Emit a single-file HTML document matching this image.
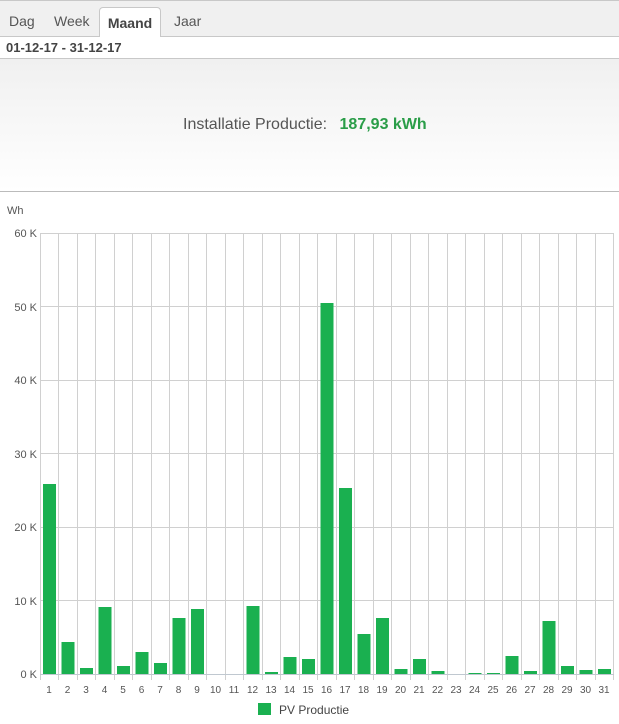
<!DOCTYPE html>
<html><head><meta charset="utf-8"><style>
body{margin:0;width:619px;height:724px;overflow:hidden;background:#fff;font-family:"Liberation Sans",sans-serif;position:relative}
.tabs{position:absolute;left:0;top:0;width:619px;height:37px;background:#f0f0f0;border-top:1px solid #c8c8c8;border-bottom:1px solid #c8c8c8;box-sizing:border-box}
.tab{position:absolute;top:12px;font-size:14px;color:#555}
.act{position:absolute;left:99px;top:7px;width:62px;height:30px;background:#fff;border:1px solid #c8c8c8;border-bottom:none;border-radius:4px 4px 0 0;box-sizing:border-box;font-weight:bold;color:#444;font-size:14px;text-align:center;line-height:30px}
.date{position:absolute;left:6px;top:40px;font-size:13px;font-weight:bold;color:#444}
.sum{position:absolute;left:0;top:58px;width:619px;height:134px;background:linear-gradient(#f0f0f0,#fff);border-top:1px solid #c8c8c8;border-bottom:1px solid #bbb;box-sizing:border-box;line-height:132px;font-size:16px;color:#555}
.sum span{position:absolute;left:183px}
.sum b{color:#2a9d48;margin-left:8px}
</style></head><body>
<div class="tabs"><span class="tab" style="left:9px">Dag</span><span class="tab" style="left:54px">Week</span><span class="tab" style="left:174px">Jaar</span></div>
<div class="act">Maand</div>
<div class="date">01-12-17 - 31-12-17</div>
<div class="sum"><span>Installatie Productie: <b>187,93 kWh</b></span></div>
<svg style="position:absolute;left:0;top:0" width="619" height="724" font-family="Liberation Sans,sans-serif">
<g stroke="#d0d0d0" stroke-width="1">
<line x1="40" x2="614" y1="233.5" y2="233.5"/><line x1="40" x2="614" y1="306.5" y2="306.5"/><line x1="40" x2="614" y1="380.5" y2="380.5"/><line x1="40" x2="614" y1="453.5" y2="453.5"/><line x1="40" x2="614" y1="527.5" y2="527.5"/><line x1="40" x2="614" y1="600.5" y2="600.5"/>
<path d="M40.5 233V680M58.5 233V680M77.5 233V680M95.5 233V680M114.5 233V680M132.5 233V680M151.5 233V680M169.5 233V680M188.5 233V680M206.5 233V680M225.5 233V680M243.5 233V680M262.5 233V680M280.5 233V680M299.5 233V680M317.5 233V680M336.5 233V680M354.5 233V680M373.5 233V680M391.5 233V680M410.5 233V680M428.5 233V680M447.5 233V680M465.5 233V680M484.5 233V680M502.5 233V680M521.5 233V680M539.5 233V680M558.5 233V680M576.5 233V680M595.5 233V680M613.5 233V680"/>
</g>
<line x1="40" x2="614" y1="674.5" y2="674.5" stroke="#c0c8d0"/>
<g fill="#1ab050">
<rect x="43" y="484" width="13" height="190"/><rect x="61.5" y="642" width="13" height="32"/><rect x="80" y="668" width="13" height="6"/><rect x="98.5" y="607" width="13" height="67"/><rect x="117" y="666" width="13" height="8"/><rect x="135.5" y="652" width="13" height="22"/><rect x="154" y="663" width="13" height="11"/><rect x="172.5" y="618" width="13" height="56"/><rect x="191" y="609" width="13" height="65"/>
<rect x="246.5" y="606" width="13" height="68"/><rect x="265" y="672" width="13" height="2"/><rect x="283.5" y="657" width="13" height="17"/><rect x="302" y="659" width="13" height="15"/><rect x="320.5" y="303" width="13" height="371"/><rect x="339" y="488" width="13" height="186"/><rect x="357.5" y="634" width="13" height="40"/><rect x="376" y="618" width="13" height="56"/><rect x="394.5" y="669" width="13" height="5"/><rect x="413" y="659" width="13" height="15"/><rect x="431.5" y="671" width="13" height="3"/>
<rect x="468.5" y="673" width="13" height="1"/><rect x="487" y="673" width="13" height="1"/><rect x="505.5" y="656" width="13" height="18"/><rect x="524" y="671" width="13" height="3"/><rect x="542.5" y="621" width="13" height="53"/><rect x="561" y="666" width="13" height="8"/><rect x="579.5" y="670" width="13" height="4"/><rect x="598" y="669" width="13" height="5"/>
</g>
<g font-size="11" fill="#555" text-anchor="end">
<text x="37" y="237">60 K</text><text x="37" y="311">50 K</text><text x="37" y="384">40 K</text><text x="37" y="458">30 K</text><text x="37" y="531">20 K</text><text x="37" y="605">10 K</text><text x="37" y="678">0 K</text>
</g>
<text x="7" y="214" font-size="11" fill="#555">Wh</text>
<g font-size="10" fill="#555" text-anchor="middle">
<text x="49" y="693">1</text><text x="67.5" y="693">2</text><text x="86" y="693">3</text><text x="104.5" y="693">4</text><text x="123" y="693">5</text><text x="141.5" y="693">6</text><text x="160" y="693">7</text><text x="178.5" y="693">8</text><text x="197" y="693">9</text><text x="215.5" y="693">10</text><text x="234" y="693">11</text><text x="252.5" y="693">12</text><text x="271" y="693">13</text><text x="289.5" y="693">14</text><text x="308" y="693">15</text><text x="326.5" y="693">16</text><text x="345" y="693">17</text><text x="363.5" y="693">18</text><text x="382" y="693">19</text><text x="400.5" y="693">20</text><text x="419" y="693">21</text><text x="437.5" y="693">22</text><text x="456" y="693">23</text><text x="474.5" y="693">24</text><text x="493" y="693">25</text><text x="511.5" y="693">26</text><text x="530" y="693">27</text><text x="548.5" y="693">28</text><text x="567" y="693">29</text><text x="585.5" y="693">30</text><text x="604" y="693">31</text>
</g>
<rect x="258" y="703" width="13" height="12" fill="#1ab050"/>
<text x="279" y="714" font-size="12" fill="#444">PV Productie</text>
</svg>
</body></html>
